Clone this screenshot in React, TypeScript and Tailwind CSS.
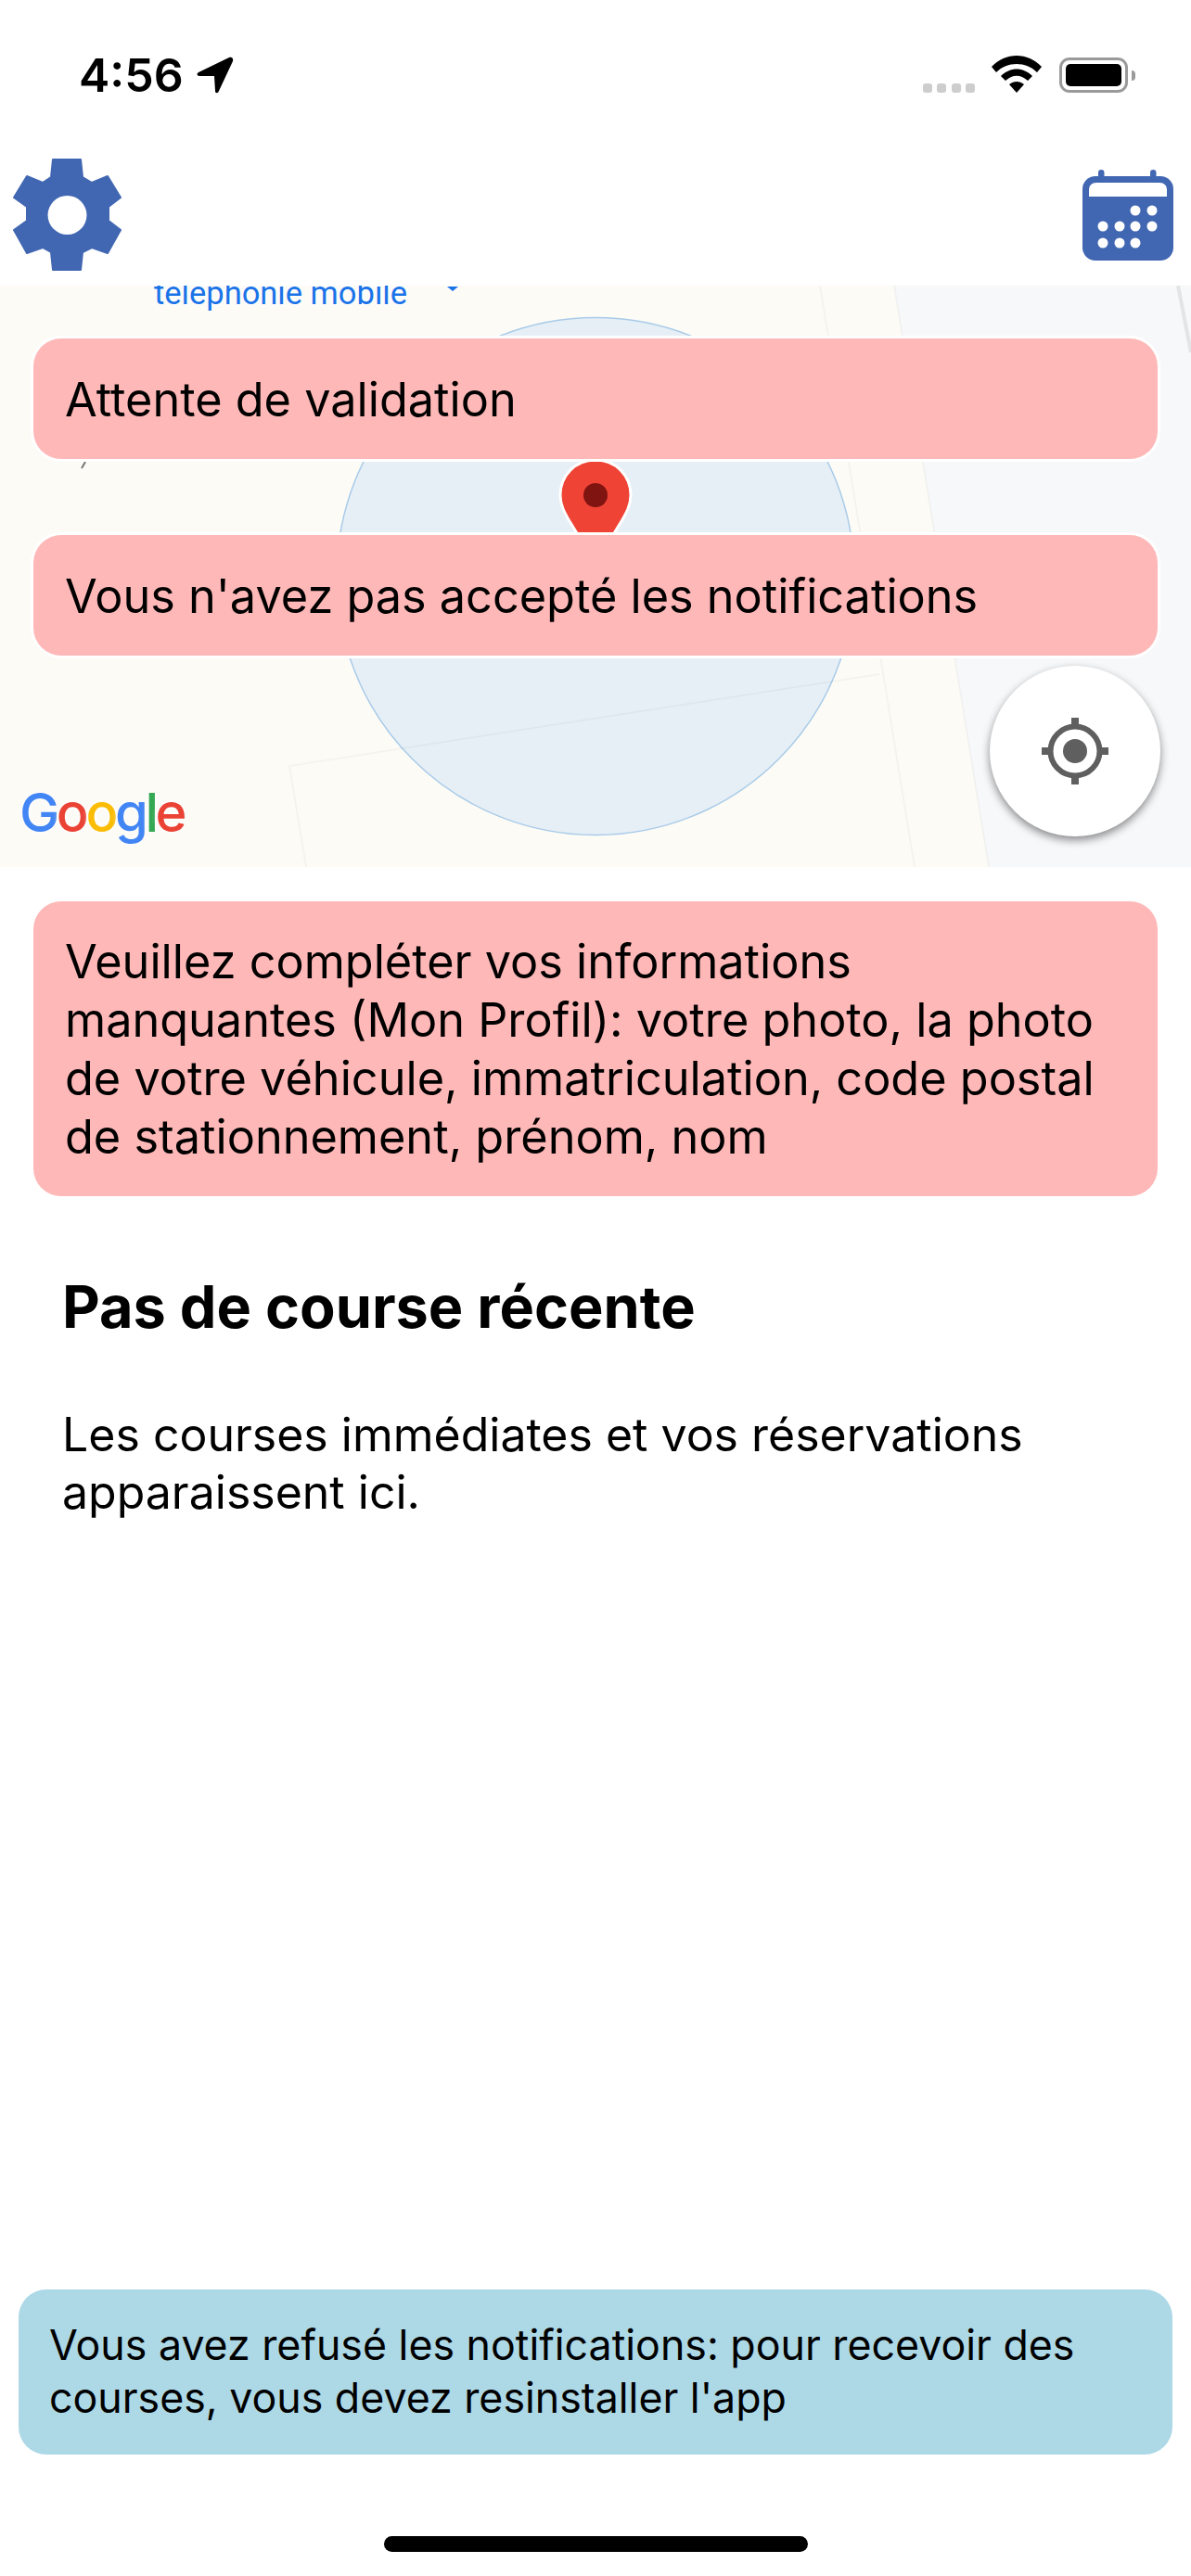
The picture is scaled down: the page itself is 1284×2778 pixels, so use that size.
const gearPoints =
  '57,172 87,172 89,191 99,197 116,190 130,213 117,223 117,238 130,248 116,273 99,267 89,272 87,291 57,291 55,272 46,267 29,273 15,248 29,238 29,223 15,213 29,190 46,197 55,191'

function Alert({ children, className = '' }: { children: React.ReactNode; className?: string }) {
  return (
    <div className={`mx-[36px] rounded-[30px] bg-[#ffb8b8] px-[34px] text-[50.4px] leading-[63px] text-black ${className}`}>
      {children}
    </div>
  )
}

function StatusBar() {
  return (
    <div className="flex h-[150px] items-start justify-between pl-[85px] pr-[60px] pt-[60px]">
      <div className="flex items-center gap-[14px]">
        <span className="text-[50px] font-semibold leading-[42px] text-black">4:56</span>
        <svg width="40" height="40" viewBox="0 0 40 40">
          <path d="M2 17 L35 1 C38 0 40 2 39 5 L24 37 C23 40 20 40 20 37 L19 21 L3 21 C0 21 0 18 2 17 Z" fill="#000" />
        </svg>
      </div>
      <div className="flex items-start">
        <div className="mt-[30px] flex gap-[5.5px]">
          <span className="h-[10px] w-[10px] rounded-[3px] bg-[#cdcdcd]" />
          <span className="h-[10px] w-[10px] rounded-[3px] bg-[#cdcdcd]" />
          <span className="h-[10px] w-[10px] rounded-[3px] bg-[#cdcdcd]" />
          <span className="h-[10px] w-[10px] rounded-[3px] bg-[#cdcdcd]" />
        </div>
        <svg className="ml-[18px]" width="54" height="40" viewBox="0 0 54 40">
          <path d="M0 12 C15 -4 39 -4 54 12 L49 18 C37 6 17 6 5 18 Z" fill="#000" />
          <path d="M10 22 C20 12 34 12 44 22 L39 27 C31 20 23 20 15 27 Z" fill="#000" />
          <path d="M19 31 C24 27 30 27 35 31 L27 40 Z" fill="#000" />
        </svg>
        <div className="ml-[19px] mt-[2px] flex items-center">
          <div className="h-[38px] w-[74px] rounded-[11px] border-[3px] border-[#9a9a9a] p-[4px]">
            <div className="h-full w-full rounded-[5px] bg-black" />
          </div>
          <div className="ml-[4px] h-[11px] w-[4px] rounded-r-full bg-[#9a9a9a]" />
        </div>
      </div>
    </div>
  )
}

function TopBar() {
  return (
    <div className="flex h-[158px] items-start justify-between pl-[13px] pr-[19px] pt-[20px]">
      <svg width="120" height="124" viewBox="13 170 120 124">
        <polygon points={gearPoints} fill="#4267b2" stroke="#4267b2" strokeWidth="2" strokeLinejoin="round" />
        <circle cx="72.5" cy="232" r="21" fill="#fff" />
      </svg>
      <svg className="mt-[13px]" width="98" height="98" viewBox="0 0 98 98">
        <rect x="17" y="0" width="6.5" height="14" rx="3.2" fill="#4267b2" />
        <rect x="73" y="0" width="6.5" height="14" rx="3.2" fill="#4267b2" />
        <rect x="0" y="7" width="98" height="91" rx="14" fill="#4267b2" />
        <path d="M7 22 C7 17 10 14 15 14 L83 14 C88 14 91 17 91 22 L91 29 L7 29 Z" fill="#fff" />
        <circle cx="57" cy="44" r="5.5" fill="#fff" />
        <circle cx="75" cy="44" r="5.5" fill="#fff" />
        <circle cx="22" cy="61" r="5.5" fill="#fff" />
        <circle cx="40" cy="61" r="5.5" fill="#fff" />
        <circle cx="57" cy="61" r="5.5" fill="#fff" />
        <circle cx="75" cy="61" r="5.5" fill="#fff" />
        <circle cx="22" cy="79" r="5.5" fill="#fff" />
        <circle cx="40" cy="79" r="5.5" fill="#fff" />
        <circle cx="57" cy="79" r="5.5" fill="#fff" />
      </svg>
    </div>
  )
}

function LocateIcon() {
  return (
    <svg width="72" height="72" viewBox="0 0 72 72" fill="#5f5f5f">
      <circle cx="36" cy="36" r="26.5" fill="none" stroke="#5f5f5f" strokeWidth="6" />
      <circle cx="36" cy="36" r="13" />
      <rect x="32" y="0" width="8" height="10" />
      <rect x="32" y="62" width="8" height="10" />
      <rect x="0" y="32" width="10" height="8" />
      <rect x="62" y="32" width="10" height="8" />
    </svg>
  )
}

function MapPanel() {
  return (
    <div className="relative h-[627px] overflow-hidden bg-[#fcfbf6]">
      {/* map drawing */}
      <svg className="absolute inset-0" width="1284" height="627" viewBox="0 0 1284 627">
        <path d="M964 0 L1284 0 L1284 627 L1066 627 Z" fill="#f7f8fa" />
        <circle cx="642" cy="313.5" r="279" fill="#e6eff6" stroke="#a9cbe8" strokeWidth="1.5" />
        <g stroke="#000" strokeOpacity="0.03" strokeWidth="2" fill="none">
          <path d="M964 0 L1066 627" />
          <path d="M884 0 L986 627" />
          <path d="M330 627 L312 518 L948 419" />
        </g>
        <path d="M1270 0 L1284 72" stroke="#e2e4e6" strokeWidth="4" fill="none" />
        <path d="M92 190 L88 197" stroke="#777" strokeWidth="2" fill="none" />
        <path d="M482 1 L494 1 L488 6 Z" fill="#1a73e8" />
        <path
          d="M642 188 C664 188 680 205 680 226 C680 238 674 247 670 254 L642 300 L614 254 C610 247 604 238 604 226 C604 205 620 188 642 188 Z"
          fill="#ee4335"
          stroke="#fff"
          strokeWidth="3"
        />
        <circle cx="642" cy="226" r="13" fill="#7f1410" />
      </svg>
      <div className="absolute left-[166px] top-[-10px] text-[34.5px] leading-[36px] text-[#1a73e8] [font-family:Roboto,sans-serif] [text-shadow:0_0_4px_#fff]">
        telephonie mobile
      </div>
      {/* alerts float over the map */}
      <div className="absolute inset-x-0 top-[57px] flex flex-col gap-[82px]">
        <Alert className="flex h-[130px] items-center shadow-[0_0_0_3px_#fff]">Attente de validation</Alert>
        <Alert className="flex h-[130px] items-center shadow-[0_0_0_3px_#fff]">Vous n'avez pas accepté les notifications</Alert>
      </div>
      <div className="absolute left-[21px] top-[538px] text-[58px] font-medium leading-[60px] tracking-[-3.5px] [text-shadow:0_0_6px_#fff]">
        <span className="text-[#4285f4]">G</span>
        <span className="text-[#ea4335]">o</span>
        <span className="text-[#fbbc05]">o</span>
        <span className="text-[#4285f4]">g</span>
        <span className="text-[#34a853]">l</span>
        <span className="text-[#ea4335]">e</span>
      </div>
      <div className="absolute left-[1067px] top-[410px] flex h-[184px] w-[184px] items-center justify-center rounded-full bg-white shadow-[0_4px_10px_rgba(0,0,0,0.45)]">
        <LocateIcon />
      </div>
    </div>
  )
}

export default function App() {
  return (
    <div className="flex h-[2778px] w-[1284px] flex-col bg-white [font-family:Inter,sans-serif]">
      <StatusBar />
      <TopBar />
      <MapPanel />
      <Alert className="mt-[37px] py-[33px]">
        Veuillez compléter vos informations manquantes (Mon Profil): votre photo, la photo de votre véhicule,
        immatriculation, code postal de stationnement, prénom, nom
      </Alert>
      <div className="px-[67px] pt-[83px]">
        <h1 className="text-[63px] font-bold leading-[72px] text-black">Pas de course récente</h1>
        <p className="mt-[71px] text-[50px] leading-[62px] text-black">
          Les courses immédiates et vos réservations apparaissent ici.
        </p>
      </div>
      <div className="mx-[20px] mt-auto rounded-[30px] bg-[#add8e6] px-[33px] py-[32px] text-[44.7px] leading-[57px] text-black">
        Vous avez refusé les notifications: pour recevoir des courses, vous devez resinstaller l'app
      </div>
      <div className="mx-auto mb-[26px] mt-[88px] h-[17px] w-[457px] rounded-full bg-black" />
    </div>
  )
}
